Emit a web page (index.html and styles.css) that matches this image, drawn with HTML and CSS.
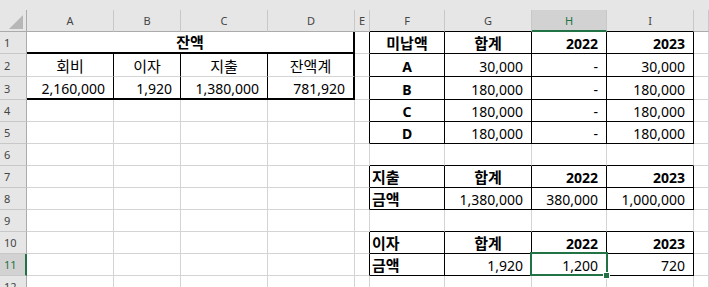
FILE: index.html
```html
<!DOCTYPE html>
<html lang="ko">
<head>
<meta charset="utf-8">
<title>Sheet</title>
<link rel="stylesheet" href="styles.css">
</head>
<body>
<div class="sheet">
  <div class="row hdr">
    <div class="corner"><svg width="14" height="14" viewBox="0 0 14 14"><polygon points="14,0 14,14 0,14" fill="#b7b7b7"/></svg></div>
    <div class="ch">A</div>
    <div class="ch">B</div>
    <div class="ch">C</div>
    <div class="ch">D</div>
    <div class="ch">E</div>
    <div class="ch kline">F</div>
    <div class="ch kline">G</div>
    <div class="ch on">H</div>
    <div class="ch kline">I</div>
    <div class="ch"></div>
  </div>

  <div class="row">
    <div class="rh">1</div>
    <div class="c ctr b tr tb span4 ko">잔액</div>
    <div class="c kr"></div>
    <div class="c ctr b kr kb ko">미납액</div>
    <div class="c ctr b kr kb ko">합계</div>
    <div class="c r b kr kb">2022</div>
    <div class="c r b kr kb">2023</div>
    <div class="c"></div>
  </div>

  <div class="row tall">
    <div class="rh">2</div>
    <div class="c ctr kr ko">회비</div>
    <div class="c ctr kr ko">이자</div>
    <div class="c ctr kr ko">지출</div>
    <div class="c ctr tr ko">잔액계</div>
    <div class="c kr"></div>
    <div class="c ctr b kr kb">A</div>
    <div class="c r kr kb">30,000</div>
    <div class="c r kr kb">-</div>
    <div class="c r kr kb">30,000</div>
    <div class="c"></div>
  </div>

  <div class="row tall">
    <div class="rh">3</div>
    <div class="c r kr tb">2,160,000</div>
    <div class="c r kr tb">1,920</div>
    <div class="c r kr tb">1,380,000</div>
    <div class="c r tr tb">781,920</div>
    <div class="c kr"></div>
    <div class="c ctr b kr kb">B</div>
    <div class="c r kr kb">180,000</div>
    <div class="c r kr kb">-</div>
    <div class="c r kr kb">180,000</div>
    <div class="c"></div>
  </div>

  <div class="row">
    <div class="rh">4</div>
    <div class="c"></div>
    <div class="c"></div>
    <div class="c"></div>
    <div class="c"></div>
    <div class="c kr"></div>
    <div class="c ctr b kr kb">C</div>
    <div class="c r kr kb">180,000</div>
    <div class="c r kr kb">-</div>
    <div class="c r kr kb">180,000</div>
    <div class="c"></div>
  </div>

  <div class="row">
    <div class="rh">5</div>
    <div class="c"></div>
    <div class="c"></div>
    <div class="c"></div>
    <div class="c"></div>
    <div class="c kr"></div>
    <div class="c ctr b kr kb">D</div>
    <div class="c r kr kb">180,000</div>
    <div class="c r kr kb">-</div>
    <div class="c r kr kb">180,000</div>
    <div class="c"></div>
  </div>

  <div class="row">
    <div class="rh">6</div>
    <div class="c"></div>
    <div class="c"></div>
    <div class="c"></div>
    <div class="c"></div>
    <div class="c"></div>
    <div class="c kb"></div>
    <div class="c kb"></div>
    <div class="c kb"></div>
    <div class="c kb"></div>
    <div class="c"></div>
  </div>

  <div class="row">
    <div class="rh">7</div>
    <div class="c"></div>
    <div class="c"></div>
    <div class="c"></div>
    <div class="c"></div>
    <div class="c kr"></div>
    <div class="c l b kr kb ko">지출</div>
    <div class="c ctr b kr kb ko">합계</div>
    <div class="c r b kr kb">2022</div>
    <div class="c r b kr kb">2023</div>
    <div class="c"></div>
  </div>

  <div class="row">
    <div class="rh">8</div>
    <div class="c"></div>
    <div class="c"></div>
    <div class="c"></div>
    <div class="c"></div>
    <div class="c kr"></div>
    <div class="c l b kr kb ko">금액</div>
    <div class="c r kr kb">1,380,000</div>
    <div class="c r kr kb">380,000</div>
    <div class="c r kr kb">1,000,000</div>
    <div class="c"></div>
  </div>

  <div class="row">
    <div class="rh">9</div>
    <div class="c"></div>
    <div class="c"></div>
    <div class="c"></div>
    <div class="c"></div>
    <div class="c"></div>
    <div class="c kb"></div>
    <div class="c kb"></div>
    <div class="c kb"></div>
    <div class="c kb"></div>
    <div class="c"></div>
  </div>

  <div class="row">
    <div class="rh">10</div>
    <div class="c"></div>
    <div class="c"></div>
    <div class="c"></div>
    <div class="c"></div>
    <div class="c kr"></div>
    <div class="c l b kr kb ko">이자</div>
    <div class="c ctr b kr kb ko">합계</div>
    <div class="c r b kr kb">2022</div>
    <div class="c r b kr kb">2023</div>
    <div class="c"></div>
  </div>

  <div class="row">
    <div class="rh on">11</div>
    <div class="c"></div>
    <div class="c"></div>
    <div class="c"></div>
    <div class="c"></div>
    <div class="c kr"></div>
    <div class="c l b kr kb ko">금액</div>
    <div class="c r kr kb">1,920</div>
    <div class="c r kr kb active">1,200<span class="selbox"><span class="handle"></span></span></div>
    <div class="c r kr kb">720</div>
    <div class="c"></div>
  </div>

  <div class="row">
    <div class="rh">12</div>
    <div class="c"></div>
    <div class="c"></div>
    <div class="c"></div>
    <div class="c"></div>
    <div class="c"></div>
    <div class="c"></div>
    <div class="c"></div>
    <div class="c"></div>
    <div class="c"></div>
    <div class="c"></div>
  </div>
</div>
</body>
</html>
```

FILE: styles.css
```css
* { box-sizing: border-box; }

html, body {
  margin: 0;
  padding: 0;
  background: #ffffff;
}

.sheet {
  width: 709px;
  height: 287px;
  overflow: hidden;
  background: #ffffff;
  font-family: "Noto Sans", "Noto Sans CJK KR", sans-serif;
  font-size: 14px;
  color: #000000;
}

.row {
  display: grid;
  grid-template-columns: 27px 87px 67px 87px 87px 15px 75px 87px 75px 87px 1fr;
  height: 22px;
}

.row.tall { height: 23px; }

/* column header strip */
.hdr {
  height: 32px;
  padding-top: 10px;
  background: #e6e6e6;
}

.corner {
  display: flex;
  justify-content: flex-end;
  align-items: flex-end;
  padding: 0 3px 2px 0;
  border-right: 1px solid #ababab;
  border-bottom: 1px solid #ababab;
}

.corner svg { display: block; }

.ch {
  display: flex;
  justify-content: center;
  align-items: center;
  border-right: 1px solid #c8c8c8;
  border-bottom: 1px solid #ababab;
  font-size: 11px;
  color: #444444;
  padding-bottom: 1px;
}

.ch.kline { border-bottom-color: #000000; }

.ch.on {
  background: #d2d2d2;
  color: #217346;
  border-bottom: 2px solid #217346;
  padding-bottom: 0;
}

/* row headers */
.rh {
  display: flex;
  align-items: center;
  padding-left: 4px;
  background: #e6e6e6;
  border-right: 1px solid #ababab;
  border-bottom: 1px solid #c8c8c8;
  font-size: 11px;
  color: #444444;
}

.rh.on {
  background: #d2d2d2;
  color: #217346;
  border-right: 2px solid #217346;
}

/* cells */
.c {
  display: flex;
  align-items: flex-end;
  line-height: 19px;
  white-space: nowrap;
  border-right: 1px solid #d4d4d4;
  border-bottom: 1px solid #d4d4d4;
  padding: 0 8px 0 2px;
}

.c.r { justify-content: flex-end; }
.c.l { justify-content: flex-start; }
.c.ctr { justify-content: center; padding: 0; }
.c.b { font-weight: 700; }
.c.ko { font-size: 15px; }

.span4 { grid-column: span 4; }

.kr { border-right-color: #000000; }
.kb { border-bottom-color: #000000; }
.tr { border-right: 2px solid #000000; }
.tb { border-bottom: 2px solid #000000; }

/* active cell selection */
.active { position: relative; }

.selbox {
  position: absolute;
  left: -2px;
  top: -2px;
  width: 78px;
  height: 24px;
  border: 2px solid #217346;
}

.handle {
  position: absolute;
  left: 72px;
  top: 19px;
  width: 5px;
  height: 5px;
  background: #217346;
  box-shadow: 0 0 0 1px #ffffff;
}
```
